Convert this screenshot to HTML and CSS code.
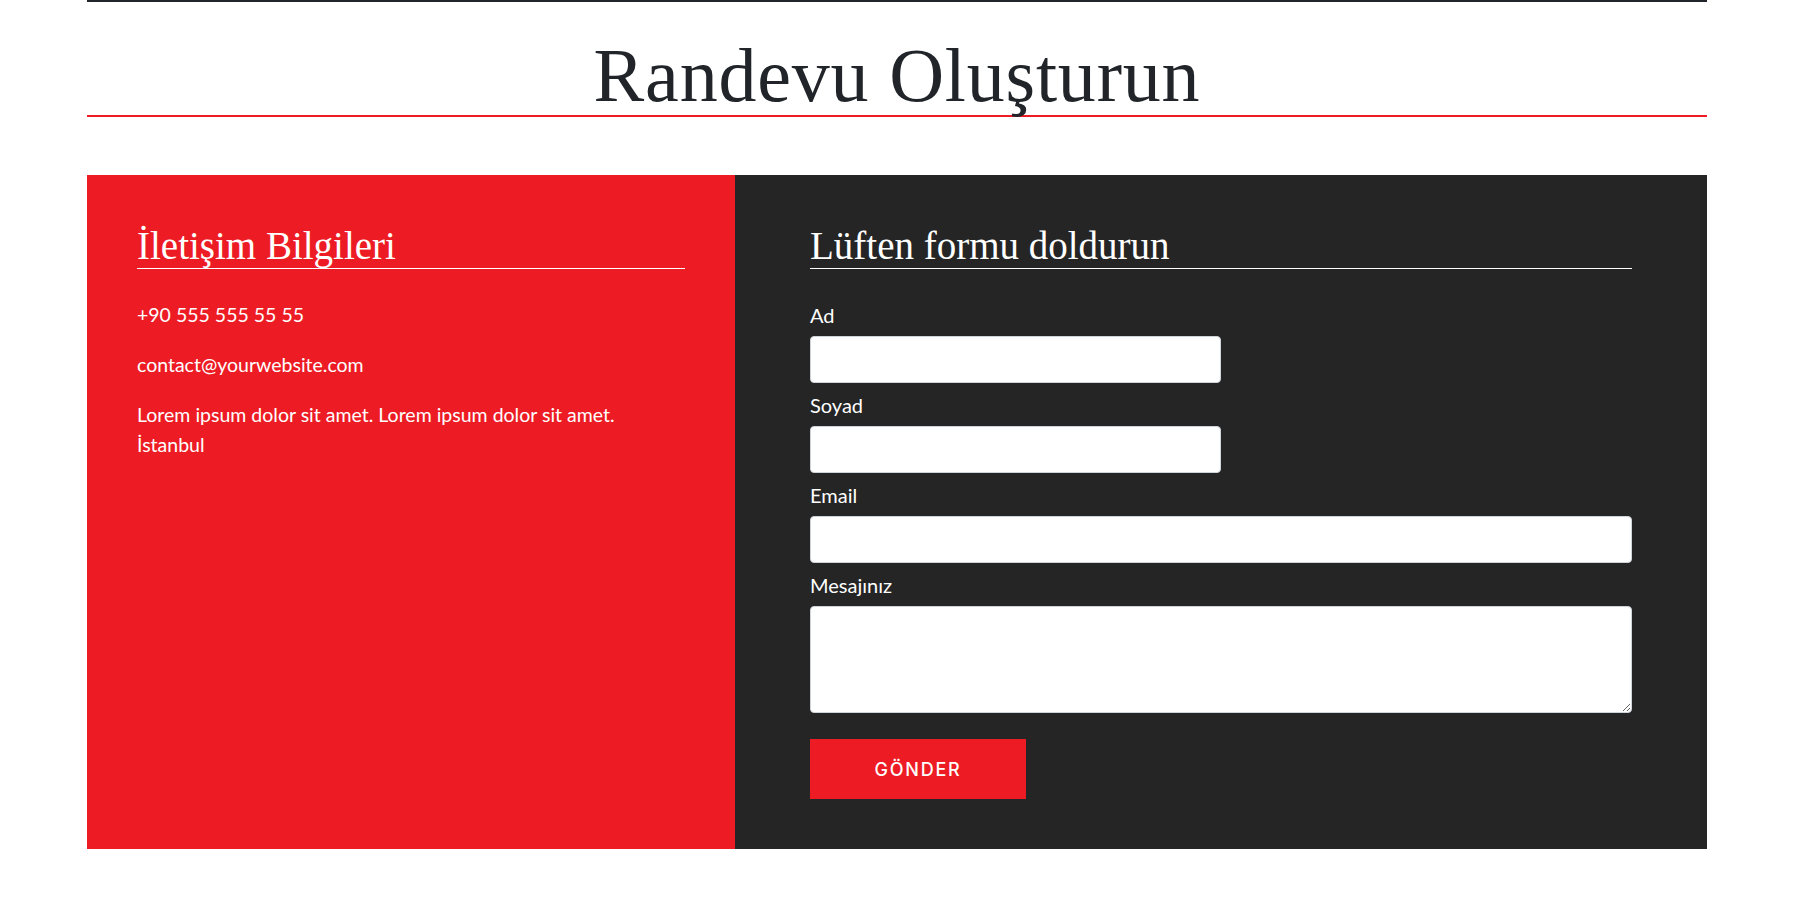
FILE: index.html
```html
<!DOCTYPE html>
<html lang="tr">
<head>
<meta charset="utf-8">
<title>Randevu Oluşturun</title>
<link rel="stylesheet" href="styles.css">
</head>
<body>
<div class="container">
  <div class="topline"></div>
  <h1 class="page-title">Randevu Oluşturun</h1>
  <section class="contact">
    <div class="info">
      <h2 class="col-title">İletişim Bilgileri</h2>
      <p class="info-text">+90 555 555 55 55</p>
      <p class="info-text">contact@yourwebsite.com</p>
      <p class="info-text">Lorem ipsum dolor sit amet. Lorem ipsum dolor sit amet.<br>İstanbul</p>
    </div>
    <div class="form-col">
      <h2 class="col-title">Lüften formu doldurun</h2>
      <form class="form">
        <div class="field field-half">
          <label class="label" for="ad">Ad</label>
          <input class="input" id="ad" type="text">
        </div>
        <div class="field field-half">
          <label class="label" for="soyad">Soyad</label>
          <input class="input" id="soyad" type="text">
        </div>
        <div class="field">
          <label class="label" for="email">Email</label>
          <input class="input" id="email" type="email">
        </div>
        <div class="field">
          <label class="label" for="mesaj">Mesajınız</label>
          <textarea class="input textarea" id="mesaj"></textarea>
        </div>
        <button class="submit" type="button">GÖNDER</button>
      </form>
    </div>
  </section>
</div>
</body>
</html>
```
FILE: styles.css
```css
* { box-sizing: border-box; }

body {
  margin: 0 18px 0 0;
  background: #ffffff;
  font-family: Lato, "Open Sans", sans-serif;
  color: #212529;
}

.container {
  max-width: 1620px;
  margin: 0 auto;
}

.topline {
  height: 2px;
  background: #212529;
}

.page-title {
  margin: 0;
  padding-top: 33px;
  font-family: "Liberation Serif", "DejaVu Serif", serif;
  font-weight: 400;
  font-size: 76px;
  line-height: 80px;
  letter-spacing: 0.8px;
  text-align: center;
  color: #212529;
  border-bottom: 2px solid #ed1c24;
}

.contact {
  margin-top: 58px;
  display: grid;
  grid-template-columns: 2fr 3fr;
}

.info {
  background: #ed1c24;
  padding: 48px 50px 50px;
  color: #ffffff;
}

.form-col {
  background: #252525;
  padding: 48px 75px 50px;
  color: #ffffff;
}

.col-title {
  margin: 0 0 31px;
  font-family: "Liberation Serif", "DejaVu Serif", serif;
  font-weight: 400;
  font-size: 39px;
  line-height: 45px;
  color: #ffffff;
  border-bottom: 1px solid #ffffff;
}

.info-text {
  margin: 0 0 20px;
  font-size: 19.5px;
  line-height: 30px;
}

.form {
  display: flex;
  flex-direction: column;
  gap: 7px;
  margin: 0;
}

.field {
  display: flex;
  flex-direction: column;
}

.field-half .input {
  width: 50%;
}

.label {
  font-size: 20px;
  line-height: 30px;
  margin-bottom: 6px;
  color: #ffffff;
}

.input {
  width: 100%;
  height: 47px;
  background: #ffffff;
  border: 1px solid #ced4da;
  border-radius: 4px;
  font-family: Lato, sans-serif;
  font-size: 16px;
  padding: 6px 12px;
  margin: 0;
}

.textarea {
  height: 107px;
  resize: vertical;
}

.submit {
  margin-top: 19px;
  width: 216px;
  height: 60px;
  border: none;
  background: #ed1c24;
  color: #ffffff;
  font-family: Inter, "Open Sans", sans-serif;
  font-weight: 500;
  font-size: 18px;
  letter-spacing: 1.8px;
  cursor: pointer;
}
```
